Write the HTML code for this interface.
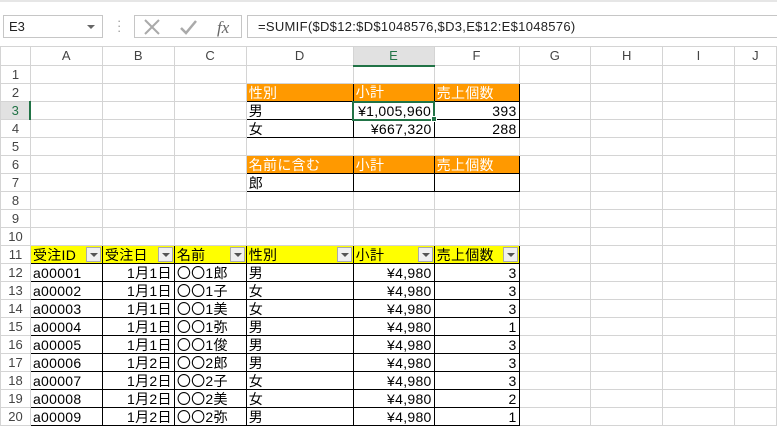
<!DOCTYPE html>
<html><head><meta charset="utf-8">
<style>
*{margin:0;padding:0;box-sizing:border-box}
body{width:777px;height:421px;overflow:hidden;background:#fff;font-family:"Liberation Sans","Noto Sans CJK JP",sans-serif;position:relative}
.top{position:absolute;left:0;top:0;width:777px;height:46px;background:#fff;border-top:2px solid #e6e6e6}
.nb{position:absolute;left:3px;top:13px;width:100px;height:23px;border:1px solid #c6c6c6;font-size:13px;padding:3px 5px;color:#222}
.nb .ar{position:absolute;right:7px;top:9px;border-left:4px solid transparent;border-right:4px solid transparent;border-top:4px solid #666}
.dots{position:absolute;left:117px;top:16px;color:#999;font-size:13px;line-height:5px;width:4px}
.ib{position:absolute;left:134px;top:13px;width:108px;height:23px;border:1px solid #c6c6c6}
.fb{position:absolute;left:247px;top:13px;width:540px;height:23px;border:1px solid #c6c6c6;font-size:13px;padding:3px 10px;color:#222;white-space:nowrap;letter-spacing:0.3px}
table{position:absolute;left:0;top:46px;border-collapse:collapse;table-layout:fixed}
td{height:18px;border:1px solid #d4d4d4;font-size:14px;line-height:16px;padding:0 2px;white-space:nowrap;overflow:hidden;position:relative;letter-spacing:0.3px}
tr.h td{height:19px;text-align:center;color:#444;background:#fff;border-color:#d4d4d4;font-size:13px}
td.rh{text-align:center;color:#444;font-size:13px;padding:0;letter-spacing:0}
td.r{text-align:right}
.b{border:1px solid #000}
.o{background:#ff9900;color:#fff}
.y{background:#ffff00}
.dd{position:absolute;right:1px;top:1px;width:15px;height:15px;background:#f0f0f0;border:1px solid #aaa}
.dd:after{content:"";position:absolute;left:3px;top:5px;border-left:4px solid transparent;border-right:4px solid transparent;border-top:4px solid #555}
.fh{position:absolute;left:431px;top:116px;width:6px;height:6px;background:#217346;border:1px solid #fff}
</style></head><body>
<div class="top">
<div class="nb">E3<span class="ar"></span></div>
<div class="dots">·<br>·<br>·</div>
<div class="ib">
<svg width="108" height="23" viewBox="0 0 108 23"><path d="M10 4 L24 18 M24 4 L10 18" stroke="#aaa" stroke-width="2" fill="none"/><path d="M46 12 L51 17 L61 5" stroke="#aaa" stroke-width="2.5" fill="none"/><text x="82" y="17" font-family="Liberation Serif,serif" font-style="italic" font-size="17" fill="#666">fx</text></svg>
</div>
<div class="fb">=SUMIF($D$12:$D$1048576,$D3,E$12:E$1048576)</div>
</div>
<table>
<colgroup><col style="width:30px"><col style="width:72px"><col style="width:72px"><col style="width:72px"><col style="width:107px"><col style="width:81px"><col style="width:85px"><col style="width:72px"><col style="width:72px"><col style="width:72px"><col style="width:42px"></colgroup>
<tr class="h"><td style="background:#fff"></td><td>A</td><td>B</td><td>C</td><td>D</td><td style="background:#e1e1e1;color:#217346;border-bottom:2px solid #217346">E</td><td>F</td><td>G</td><td>H</td><td>I</td><td>J</td></tr>
<tr><td class="rh">1</td><td></td><td></td><td></td><td></td><td></td><td></td><td></td><td></td><td></td><td></td></tr>
<tr><td class="rh">2</td><td></td><td></td><td></td><td class="b o">性別</td><td class="b o">小計</td><td class="b o">売上個数</td><td></td><td></td><td></td><td></td></tr>
<tr><td class="rh" style="background:#e1e1e1;color:#217346;border-right:2px solid #217346">3</td><td></td><td></td><td></td><td class="b">男</td><td class="b r" style="border:2px solid #217346">¥1,005,960</td><td class="b r">393</td><td></td><td></td><td></td><td></td></tr>
<tr><td class="rh">4</td><td></td><td></td><td></td><td class="b">女</td><td class="b r">¥667,320</td><td class="b r">288</td><td></td><td></td><td></td><td></td></tr>
<tr><td class="rh">5</td><td></td><td></td><td></td><td></td><td></td><td></td><td></td><td></td><td></td><td></td></tr>
<tr><td class="rh">6</td><td></td><td></td><td></td><td class="b o">名前に含む</td><td class="b o">小計</td><td class="b o">売上個数</td><td></td><td></td><td></td><td></td></tr>
<tr><td class="rh">7</td><td></td><td></td><td></td><td class="b">郎</td><td class="b"></td><td class="b"></td><td></td><td></td><td></td><td></td></tr>
<tr><td class="rh">8</td><td></td><td></td><td></td><td></td><td></td><td></td><td></td><td></td><td></td><td></td></tr>
<tr><td class="rh">9</td><td></td><td></td><td></td><td></td><td></td><td></td><td></td><td></td><td></td><td></td></tr>
<tr><td class="rh">10</td><td></td><td></td><td></td><td></td><td></td><td></td><td></td><td></td><td></td><td></td></tr>
<tr><td class="rh">11</td><td class="b y">受注ID<span class="dd"></span></td><td class="b y">受注日<span class="dd"></span></td><td class="b y">名前<span class="dd"></span></td><td class="b y">性別<span class="dd"></span></td><td class="b y">小計<span class="dd"></span></td><td class="b y">売上個数<span class="dd"></span></td><td></td><td></td><td></td><td></td></tr>
<tr><td class="rh">12</td><td class="b">a00001</td><td class="b r">1月1日</td><td class="b">〇〇1郎</td><td class="b">男</td><td class="b r">¥4,980</td><td class="b r">3</td><td></td><td></td><td></td><td></td></tr>
<tr><td class="rh">13</td><td class="b">a00002</td><td class="b r">1月1日</td><td class="b">〇〇1子</td><td class="b">女</td><td class="b r">¥4,980</td><td class="b r">3</td><td></td><td></td><td></td><td></td></tr>
<tr><td class="rh">14</td><td class="b">a00003</td><td class="b r">1月1日</td><td class="b">〇〇1美</td><td class="b">女</td><td class="b r">¥4,980</td><td class="b r">3</td><td></td><td></td><td></td><td></td></tr>
<tr><td class="rh">15</td><td class="b">a00004</td><td class="b r">1月1日</td><td class="b">〇〇1弥</td><td class="b">男</td><td class="b r">¥4,980</td><td class="b r">1</td><td></td><td></td><td></td><td></td></tr>
<tr><td class="rh">16</td><td class="b">a00005</td><td class="b r">1月1日</td><td class="b">〇〇1俊</td><td class="b">男</td><td class="b r">¥4,980</td><td class="b r">3</td><td></td><td></td><td></td><td></td></tr>
<tr><td class="rh">17</td><td class="b">a00006</td><td class="b r">1月2日</td><td class="b">〇〇2郎</td><td class="b">男</td><td class="b r">¥4,980</td><td class="b r">3</td><td></td><td></td><td></td><td></td></tr>
<tr><td class="rh">18</td><td class="b">a00007</td><td class="b r">1月2日</td><td class="b">〇〇2子</td><td class="b">女</td><td class="b r">¥4,980</td><td class="b r">3</td><td></td><td></td><td></td><td></td></tr>
<tr><td class="rh">19</td><td class="b">a00008</td><td class="b r">1月2日</td><td class="b">〇〇2美</td><td class="b">女</td><td class="b r">¥4,980</td><td class="b r">2</td><td></td><td></td><td></td><td></td></tr>
<tr><td class="rh">20</td><td class="b">a00009</td><td class="b r">1月2日</td><td class="b">〇〇2弥</td><td class="b">男</td><td class="b r">¥4,980</td><td class="b r">1</td><td></td><td></td><td></td><td></td></tr>
</table>
<div class="fh"></div>
</body></html>
